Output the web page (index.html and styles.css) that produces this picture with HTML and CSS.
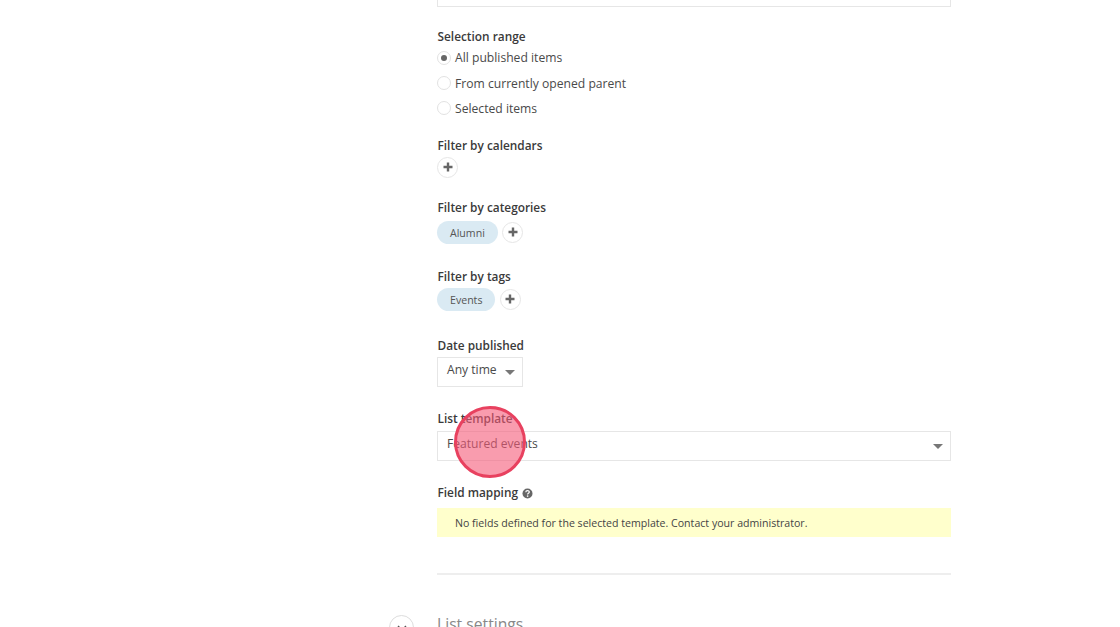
FILE: index.html
```html
<!DOCTYPE html>
<html lang="en">
<head>
    <meta charset="UTF-8">
    <title>List settings</title>
    <link rel="stylesheet" href="styles.css">
</head>
<body>
    <div class="page">
        <div class="form">
            <div class="top-input"></div>

            <div class="field field-range">
                <div class="label">Selection range</div>
                <div class="radio-row"><span class="radio checked"></span>All published items</div>
                <div class="radio-row"><span class="radio"></span>From currently opened parent</div>
                <div class="radio-row"><span class="radio"></span>Selected items</div>
            </div>

            <div class="field field-calendars">
                <div class="label">Filter by calendars</div>
                <div class="chips">
                    <button class="add-btn"><svg width="10" height="10" viewBox="0 0 10 10"><path d="M5 0.5v9M0.5 5h9" stroke="#666" stroke-width="2.4"/></svg></button>
                </div>
            </div>

            <div class="field field-categories">
                <div class="label">Filter by categories</div>
                <div class="chips chips-low">
                    <span class="chip">Alumni</span>
                    <button class="add-btn"><svg width="10" height="10" viewBox="0 0 10 10"><path d="M5 0.5v9M0.5 5h9" stroke="#666" stroke-width="2.4"/></svg></button>
                </div>
            </div>

            <div class="field field-tags">
                <div class="label">Filter by tags</div>
                <div class="chips">
                    <span class="chip">Events</span>
                    <button class="add-btn"><svg width="10" height="10" viewBox="0 0 10 10"><path d="M5 0.5v9M0.5 5h9" stroke="#666" stroke-width="2.4"/></svg></button>
                </div>
            </div>

            <div class="field field-date">
                <div class="label">Date published</div>
                <div class="select select-small">Any time<span class="caret"></span></div>
            </div>

            <div class="field field-template">
                <div class="label">List template</div>
                <div class="select">Featured events<span class="caret"></span></div>
            </div>

            <div class="field field-mapping">
                <div class="label">Field mapping
                    <svg class="help" width="11" height="11" viewBox="0 0 11 11"><circle cx="5.5" cy="5.5" r="5" fill="#666"/><path d="M3.8 4.3c0-2.2 3.5-2.2 3.5-.2 0 1.3-1.7 1.2-1.7 2.4" fill="none" stroke="#fff" stroke-width="1.2"/><rect x="4.9" y="7.4" width="1.4" height="1.4" fill="#fff"/></svg>
                </div>
                <div class="notice">No fields defined for the selected template. Contact your administrator.</div>
            </div>

            <hr class="divider">

            <div class="section-head">
                <span class="toggle"><svg width="10" height="6" viewBox="0 0 10 6"><path d="M1 1l4 4 4-4" fill="none" stroke="#555" stroke-width="1.4"/></svg></span>
                List settings
            </div>
        </div>

        <div class="click-marker"></div>
    </div>
</body>
</html>
```

FILE: styles.css
```css
html, body {
    margin: 0;
    height: 100%;
    background-color: #fff;
}
.page {
    position: relative;
    height: 627px;
    overflow: hidden;
    font-family: "Open Sans", sans-serif;
    font-size: 12.1px;
    color: #4a4a4a;
}
.form {
    width: 514px;
    margin-left: 437px;
}
.top-input {
    height: 6px;
    border: 1px solid #e6e6e6;
    border-top: none;
}
.field-range { margin-top: 20px; }
.field-calendars { margin-top: 15px; }
.field-categories { margin-top: 20px; }
.field-tags { margin-top: 23px; }
.field-date { margin-top: 25px; }
.field-template { margin-top: 22px; }
.field-mapping { margin-top: 22px; }

.label {
    padding-left: 0.5px;
    font-size: 11.85px;
    font-weight: 600;
    line-height: 18px;
    color: #3a3a3a;
}
.radio-row {
    display: flex;
    align-items: center;
    height: 25.4px;
    font-size: 12.15px;
}
.radio {
    box-sizing: border-box;
    width: 14px;
    height: 14px;
    margin-right: 4px;
    border: 1px solid #e2e2e2;
    border-radius: 50%;
    display: flex;
    align-items: center;
    justify-content: center;
}
.radio.checked::after {
    content: "";
    width: 6px;
    height: 6px;
    border-radius: 50%;
    background-color: #666;
}
.chips {
    display: flex;
    align-items: center;
    gap: 4.5px;
    margin-top: 3px;
}
.chips-low { margin-top: 5px; }
.chip {
    display: flex;
    align-items: center;
    height: 23px;
    padding: 0 13px;
    border-radius: 12px;
    background-color: #daeaf3;
    font-size: 10.6px;
    color: #555;
}
.add-btn {
    box-sizing: border-box;
    width: 21px;
    height: 21px;
    padding: 0 0 2px;
    border: 1px solid #e6e6e6;
    border-radius: 50%;
    background-color: #fff;
    display: flex;
    align-items: center;
    justify-content: center;
}
.select {
    box-sizing: border-box;
    display: flex;
    align-items: center;
    justify-content: space-between;
    height: 30px;
    margin-top: 4px;
    padding: 0 7px 5px 9px;
    border: 1px solid #e6e6e6;
    font-size: 12.1px;
}
.select-small {
    width: 86px;
    margin-top: 3px;
}
.caret {
    width: 0;
    height: 0;
    margin-top: 6px;
    border-left: 5px solid transparent;
    border-right: 5px solid transparent;
    border-top: 5px solid #777;
}
.help {
    margin-left: 1px;
    vertical-align: -1.5px;
}
.notice {
    display: flex;
    align-items: center;
    height: 29px;
    margin-top: 7px;
    padding-left: 18px;
    background-color: #ffffcc;
    font-size: 10.6px;
    color: #444;
}
.divider {
    height: 2px;
    margin: 36px 0 0;
    border: none;
    background-color: #eeeeee;
}
.section-head {
    position: relative;
    margin-top: 37px;
    font-size: 15.7px;
    line-height: 24px;
    color: #888;
}
.toggle {
    position: absolute;
    left: -48px;
    top: 3px;
    box-sizing: border-box;
    width: 25px;
    height: 25px;
    border: 1px solid #ddd;
    border-radius: 50%;
    display: flex;
    align-items: center;
    justify-content: center;
}
.click-marker {
    position: absolute;
    left: 454px;
    top: 406px;
    box-sizing: border-box;
    width: 72px;
    height: 72px;
    border: 3px solid #e8415f;
    border-radius: 50%;
    background-color: rgba(245, 90, 120, 0.6);
}
```
